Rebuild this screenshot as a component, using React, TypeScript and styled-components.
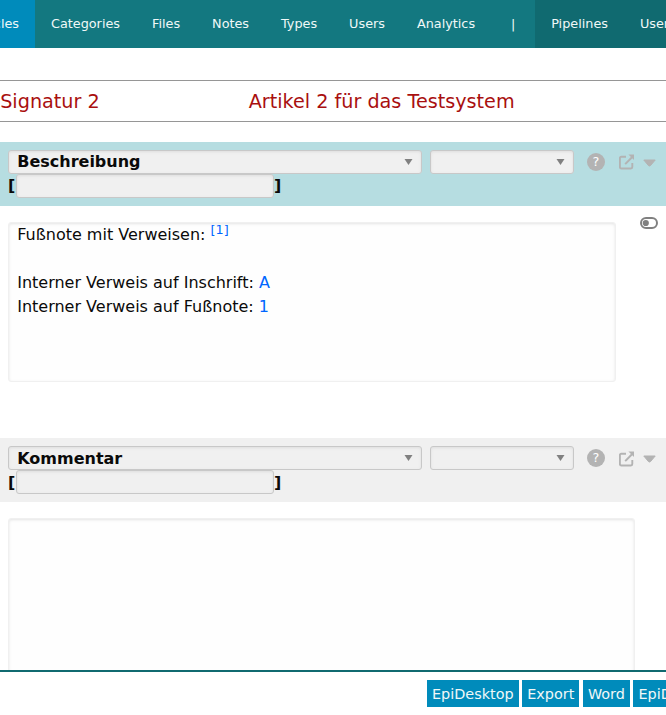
import React from "react";
import styled, { createGlobalStyle } from "styled-components";

const GlobalStyle = createGlobalStyle`
  * { box-sizing: border-box; }
  body {
    margin: 0;
    overflow: hidden;
    background: #fff;
    color: #0a0a0a;
    font: 16px/24px "DejaVu Sans", sans-serif;
  }
`;

const Page = styled.div`
  display: flex;
  flex-direction: column;
  width: 100%;
  height: 100vh;
  overflow: hidden;
`;

const Nav = styled.nav`
  display: flex;
  flex: none;
  height: 48px;
  overflow: hidden;
  background: #137880;
  font-size: 12.8px;
`;

const NavItem = styled.a<{ $tone?: "active" | "dark"; $clipped?: boolean }>`
  display: flex;
  justify-content: flex-end;
  flex: none;
  padding: 0 16px;
  width: ${(p) => (p.$clipped ? "35px" : "auto")};
  line-height: 48px;
  white-space: nowrap;
  color: #f0f8f8;
  background: ${(p) =>
    p.$tone === "active" ? "#008bbb" : p.$tone === "dark" ? "#106a70" : "transparent"};
`;

const Content = styled.main`
  flex: 1;
  min-height: 0;
  overflow: hidden;
  padding-top: 32px;
`;

const TitleRow = styled.header`
  display: grid;
  grid-template-columns: 248.5px 1fr;
  height: 42px;
  padding-left: 0.2px;
  border-top: 1px solid #969696;
  border-bottom: 1px solid #969696;
  margin-bottom: 20px;
  color: #a90f0f;
  font-size: 19.2px;
  line-height: 42px;
  white-space: nowrap;
`;

const SectionHead = styled.div<{ $selected?: boolean }>`
  height: 64px;
  padding: 8px;
  background: ${(p) => (p.$selected ? "#b6dde1" : "#f0f0f0")};
  font-weight: bold;
`;

const Controls = styled.div`
  display: flex;
  align-items: center;
  height: 24px;
`;

const Field = styled.div<{ $width: number }>`
  display: flex;
  align-items: center;
  justify-content: space-between;
  flex: none;
  width: ${(p) => p.$width}px;
  height: 24px;
  padding: 0 8px 0 8.2px;
  border: 1px solid #c8c8c8;
  border-radius: 3px;
  background: #f0f0f0;
  box-shadow: inset 0 1px 3px #ddd;
  line-height: 22px;
`;

const Label = styled.span<{ $drop: number }>`
  padding-top: ${(p) => p.$drop * 2}px;
`;

const Gap = styled.span<{ $width: number }>`
  flex: none;
  width: ${(p) => p.$width}px;
`;

const Help = styled.span`
  display: flex;
  align-items: center;
  justify-content: center;
  flex: none;
  width: 18px;
  height: 18px;
  border-radius: 50%;
  background: #b3b3b3;
  color: #fff;
  font-size: 12.8px;
  font-weight: normal;
  line-height: 18px;
`;

const Icon = styled.svg<{ $drop?: number }>`
  display: block;
  flex: none;
  margin-top: ${(p) => (p.$drop ?? 0) * 2}px;
`;

const Signature = styled.div`
  display: flex;
  height: 24px;
`;

const Bracket = styled.span<{ $drop: number }>`
  width: 8px;
  padding-top: ${(p) => p.$drop}px;
`;

const EditorRow = styled.div`
  display: flex;
  justify-content: space-between;
  padding: 16px 8px 0;
`;

const Editor = styled.div<{ $width: number; $height: number }>`
  width: ${(p) => p.$width}px;
  height: ${(p) => p.$height}px;
  padding: 0 8px 0 8.2px;
  border: 1px solid #f0f0f0;
  border-radius: 3px;
  background: #fefefe;
  box-shadow: inset 0 1px 3px #e4e4e4;
`;

const Line = styled.p`
  margin: 0;
  height: 24px;
  white-space: nowrap;
`;

const Link = styled.a`
  color: #0066ff;
`;

const Footnote = styled.sup`
  color: #0066ff;
  font-size: 12.8px;
  line-height: 0;
`;

const Toggle = styled.div`
  flex: none;
  margin-top: -5px;
`;

const Section = styled.section<{ $height: number }>`
  height: ${(p) => p.$height}px;
`;

const Footer = styled.footer`
  display: flex;
  flex: none;
  gap: 3.6px;
  height: 45px;
  padding: 8px 0 0 427px;
  border-top: 2px solid #106a70;
  background: #fff;
  overflow: hidden;
`;

const Action = styled.button`
  flex: none;
  height: 27px;
  padding: 1px 5px 0;
  border: 0;
  background: #008bbb;
  color: #f0f8f8;
  font: 14.4px/27px "DejaVu Sans", sans-serif;
  white-space: nowrap;
`;

const SelectArrow = () => (
  <Icon width="9" height="6" viewBox="0 0 9 6">
    <path d="M.5 0h8L4.5 6z" fill="#808080" />
  </Icon>
);

const OpenIcon = ({ drop }: { drop: number }) => (
  <Icon $drop={drop} width="16" height="16" viewBox="0 0 16 16" fill="none" stroke="#b3b3b3" strokeWidth="1.9">
    <path d="M7 2.7H2.3Q.9 2.7.9 4.1v9Q.9 14.5 2.3 14.5h9.6q1.4 0 1.4-1.4V9" />
    <path d="M6.2 10.1 13 3.2" strokeWidth="2" />
    <path d="M9.4.4h5.6v5.6z" fill="#b3b3b3" stroke="none" />
  </Icon>
);

const CollapseIcon = () => (
  <Icon $drop={1} width="13" height="8" viewBox="0 0 13 8">
    <path d="M.8 1h11.4L7.6 6.5Q6.5 7.5 5.4 6.5z" fill="#b3b3b3" stroke="#b3b3b3" strokeLinejoin="round" />
  </Icon>
);

const ToggleIcon = () => (
  <Icon width="18" height="12" viewBox="0 0 18 12">
    <rect x="1" y="1" width="16" height="10" rx="5" fill="none" stroke="#808080" strokeWidth="2" />
    <circle cx="5.8" cy="6" r="3.1" fill="#808080" />
  </Icon>
);

const SectionHeader = ({
  title,
  selected,
  drop = 0,
}: {
  title: string;
  selected?: boolean;
  drop?: number;
}) => (
  <SectionHead $selected={selected}>
    <Controls>
      <Field $width={414}>
        <Label $drop={drop}>{title}</Label>
        <SelectArrow />
      </Field>
      <Gap $width={8} />
      <Field $width={144}>
        <span />
        <SelectArrow />
      </Field>
      <Gap $width={13} />
      <Help>?</Help>
      <Gap $width={14} />
      <OpenIcon drop={drop} />
      <Gap $width={8} />
      <CollapseIcon />
    </Controls>
    <Signature>
      <Bracket $drop={drop}>[</Bracket>
      <Field $width={258} />
      <Bracket $drop={drop}>]</Bracket>
    </Signature>
  </SectionHead>
);

export default function App() {
  return (
    <Page>
      <GlobalStyle />
      <Nav>
        <NavItem $tone="active" $clipped>Articles</NavItem>
        {["Categories", "Files", "Notes", "Types", "Users", "Analytics"].map((label) => (
          <NavItem key={label}>{label}</NavItem>
        ))}
        <Gap $width={4} />
        <NavItem>|</NavItem>
        <Gap $width={3.8} />
        <NavItem $tone="dark">Pipelines</NavItem>
        <NavItem $tone="dark">Users</NavItem>
      </Nav>
      <Content>
        <TitleRow>
          <span>Signatur 2</span>
          <span>Artikel 2 für das Testsystem</span>
        </TitleRow>
        <Section $height={296}>
          <SectionHeader title="Beschreibung" selected />
          <EditorRow>
            <Editor $width={608} $height={160}>
              <Line>
                Fußnote mit Verweisen: <Footnote>[1]</Footnote>
              </Line>
              <Line />
              <Line>
                Interner Verweis auf Inschrift: <Link>A</Link>
              </Line>
              <Line>
                Interner Verweis auf Fußnote: <Link>1</Link>
              </Line>
            </Editor>
            <Toggle>
              <ToggleIcon />
            </Toggle>
          </EditorRow>
        </Section>
        <Section $height={296}>
          <SectionHeader title="Kommentar" drop={1} />
          <EditorRow>
            <Editor $width={627} $height={160} />
          </EditorRow>
        </Section>
      </Content>
      <Footer>
        <Action>EpiDesktop</Action>
        <Action>Export</Action>
        <Action>Word</Action>
        <Action>EpiDesktop</Action>
      </Footer>
    </Page>
  );
}
